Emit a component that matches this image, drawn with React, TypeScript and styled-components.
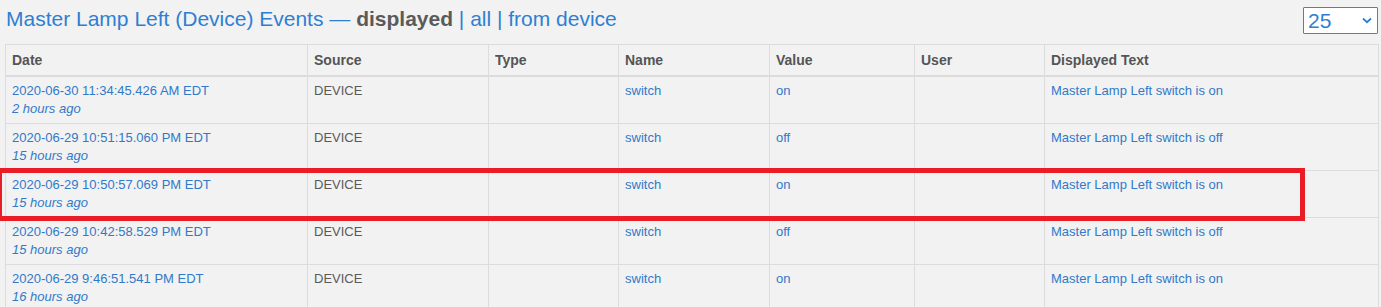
import * as React from 'react';
import styled, { createGlobalStyle } from 'styled-components';

type EventRow = {
    date: string;
    ago: string;
    source: string;
    type: string;
    name: string;
    value: string;
    user: string;
    text: string;
};

const EVENTS: EventRow[] = [
    {
        date: '2020-06-30 11:34:45.426 AM EDT',
        ago: '2 hours ago',
        source: 'DEVICE',
        type: '',
        name: 'switch',
        value: 'on',
        user: '',
        text: 'Master Lamp Left switch is on',
    },
    {
        date: '2020-06-29 10:51:15.060 PM EDT',
        ago: '15 hours ago',
        source: 'DEVICE',
        type: '',
        name: 'switch',
        value: 'off',
        user: '',
        text: 'Master Lamp Left switch is off',
    },
    {
        date: '2020-06-29 10:50:57.069 PM EDT',
        ago: '15 hours ago',
        source: 'DEVICE',
        type: '',
        name: 'switch',
        value: 'on',
        user: '',
        text: 'Master Lamp Left switch is on',
    },
    {
        date: '2020-06-29 10:42:58.529 PM EDT',
        ago: '15 hours ago',
        source: 'DEVICE',
        type: '',
        name: 'switch',
        value: 'off',
        user: '',
        text: 'Master Lamp Left switch is off',
    },
    {
        date: '2020-06-29 9:46:51.541 PM EDT',
        ago: '16 hours ago',
        source: 'DEVICE',
        type: '',
        name: 'switch',
        value: 'on',
        user: '',
        text: 'Master Lamp Left switch is on',
    },
];

const COLUMNS = [
    { label: 'Date', width: 302 },
    { label: 'Source', width: 181 },
    { label: 'Type', width: 130 },
    { label: 'Name', width: 151 },
    { label: 'Value', width: 145 },
    { label: 'User', width: 130 },
    { label: 'Displayed Text', width: 334 },
];

const HIGHLIGHTED = 2;

const App = () => {
    const [pageSize, setPageSize] = React.useState('25');

    return (
        <>
            <GlobalStyle />
            <Page>
                <TopBar>
                    <Title>
                        <TitleLink href="#">Master Lamp Left (Device) Events</TitleLink>
                        {' — '}
                        <Current>displayed</Current>
                        <Sep> | </Sep>
                        <TitleLink href="#">all</TitleLink>
                        <Sep> | </Sep>
                        <TitleLink href="#">from device</TitleLink>
                    </Title>
                    <PageSize
                        value={pageSize}
                        onChange={(e) => setPageSize(e.target.value)}
                    >
                        <option value="10">10</option>
                        <option value="25">25</option>
                        <option value="50">50</option>
                        <option value="100">100</option>
                    </PageSize>
                </TopBar>

                <TableWrap>
                    <EventsTable>
                        <colgroup>
                            {COLUMNS.map((c) => (
                                <col key={c.label} style={{ width: c.width }} />
                            ))}
                        </colgroup>
                        <thead>
                            <tr>
                                {COLUMNS.map((c) => (
                                    <HeadCell key={c.label}>{c.label}</HeadCell>
                                ))}
                            </tr>
                        </thead>
                        <tbody>
                            {EVENTS.map((ev, i) => (
                                <tr key={i}>
                                    <Cell>
                                        <CellLink href="#">{ev.date}</CellLink>
                                        <Ago>{ev.ago}</Ago>
                                    </Cell>
                                    <Cell>{ev.source}</Cell>
                                    <Cell>{ev.type}</Cell>
                                    <Cell>
                                        <CellLink href="#">{ev.name}</CellLink>
                                    </Cell>
                                    <Cell>
                                        <CellLink href="#">{ev.value}</CellLink>
                                    </Cell>
                                    <Cell>{ev.user}</Cell>
                                    <Cell>
                                        <CellLink href="#">{ev.text}</CellLink>
                                    </Cell>
                                </tr>
                            ))}
                        </tbody>
                    </EventsTable>
                    <Highlight $row={HIGHLIGHTED} />
                </TableWrap>
            </Page>
        </>
    );
};

const GlobalStyle = createGlobalStyle`
    html, body {
        margin: 0;
        padding: 0;
        background: #f2f2f2;
        overflow: hidden;
    }
    body {
        font-family: "Liberation Sans", Arial, sans-serif;
        font-size: 13px;
        color: #555;
    }
`;

const Page = styled.div`
    padding: 0 3px 0 5px;
`;

const TopBar = styled.div`
    display: flex;
    justify-content: space-between;
    align-items: flex-start;
    height: 44px;
`;

const Title = styled.div`
    font-size: 21px;
    line-height: 24px;
    padding: 7px 0 0 1px;
    color: #2e7fd3;
    white-space: nowrap;
`;

const TitleLink = styled.a`
    color: #2e7fd3;
    text-decoration: none;
`;

const Current = styled.b`
    color: #5a5a5a;
`;

const Sep = styled.span`
    color: #2e7fd3;
`;

const PageSize = styled.select`
    margin-top: 7px;
    width: 75px;
    height: 27px;
    box-sizing: border-box;
    border: 1px solid #777;
    border-radius: 1px;
    background: #fff;
    color: #2e7fd3;
    font-family: "Liberation Sans", Arial, sans-serif;
    font-size: 21px;
    padding: 0 0 0 4px;
    outline: none;
    appearance: none;
    background-image: url("data:image/svg+xml;utf8,<svg xmlns='http://www.w3.org/2000/svg' width='10' height='7' viewBox='0 0 10 7'><path d='M1 1.5 L5 5.2 L9 1.5' fill='none' stroke='%232e7fd3' stroke-width='1.8'/></svg>");
    background-repeat: no-repeat;
    background-position: right 5px center;
`;

const TableWrap = styled.div`
    position: relative;
`;

const EventsTable = styled.table`
    width: 1373px;
    table-layout: fixed;
    border-collapse: collapse;
    border: 1px solid #dcdcdc;
`;

const HeadCell = styled.th`
    text-align: left;
    font-size: 14px;
    font-weight: bold;
    color: #555;
    line-height: 18px;
    padding: 6px 6px 6px 6px;
    border: 1px solid #dcdcdc;
    border-bottom: 2px solid #dcdcdc;
`;

const Cell = styled.td`
    vertical-align: top;
    font-size: 13px;
    line-height: 18px;
    padding: 5px 6px;
    height: 36px;
    color: #5a5a5a;
    border: 1px solid #dcdcdc;
    white-space: nowrap;
`;

const CellLink = styled.a`
    display: block;
    color: #3179c9;
    text-decoration: none;
`;

const Ago = styled.i`
    display: block;
    color: #3179c9;
`;

const Highlight = styled.div<{ $row: number }>`
    position: absolute;
    left: -8px;
    top: ${({ $row }) => 32 + $row * 47 - 2}px;
    width: 1308px;
    height: 53px;
    box-sizing: border-box;
    border: 5px solid #ea1c26;
    pointer-events: none;
`;

export default App;
